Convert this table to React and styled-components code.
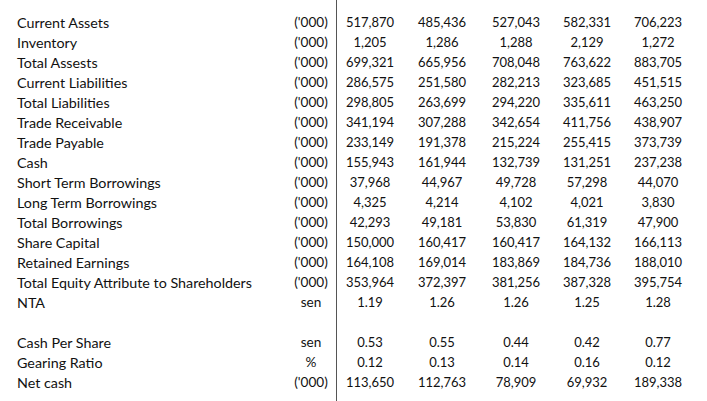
import React from 'react'
import styled, { createGlobalStyle } from 'styled-components'

const GlobalStyle = createGlobalStyle`
  html, body {
    margin: 0;
    padding: 0;
    background: #fff;
  }
  body {
    font-family: 'Lato', 'Liberation Sans', sans-serif;
    color: #111;
  }
`

const Sheet = styled.div`
  display: flex;
  height: 401px;
  width: 707px;
  overflow: hidden;
  font-size: 14.3px;
`

const LabelPane = styled.div`
  width: 336px;
  padding: 12px 4px 0 17px;
  box-sizing: border-box;
`

const DataPane = styled.div`
  border-left: 1px solid #555;
  padding-top: 12px;
`

const LabelRow = styled.div`
  display: grid;
  grid-template-columns: 1fr 42px;
  height: 20px;
  align-items: center;
  white-space: nowrap;
`

const Unit = styled.span`
  text-align: center;
  font-size: 13.6px;
`

const DataRow = styled.div`
  display: grid;
  grid-template-columns: 66px 78px 70px 72px 70px;
  height: 20px;
  align-items: center;
  font-size: 13px;
`

const Num = styled.span`
  text-align: center;
`

const rows = [
  ['Current Assets', "('000)", ['517,870', '485,436', '527,043', '582,331', '706,223']],
  ['Inventory', "('000)", ['1,205', '1,286', '1,288', '2,129', '1,272']],
  ['Total Assests', "('000)", ['699,321', '665,956', '708,048', '763,622', '883,705']],
  ['Current Liabilities', "('000)", ['286,575', '251,580', '282,213', '323,685', '451,515']],
  ['Total Liabilities', "('000)", ['298,805', '263,699', '294,220', '335,611', '463,250']],
  ['Trade Receivable', "('000)", ['341,194', '307,288', '342,654', '411,756', '438,907']],
  ['Trade Payable', "('000)", ['233,149', '191,378', '215,224', '255,415', '373,739']],
  ['Cash', "('000)", ['155,943', '161,944', '132,739', '131,251', '237,238']],
  ['Short Term Borrowings', "('000)", ['37,968', '44,967', '49,728', '57,298', '44,070']],
  ['Long Term Borrowings', "('000)", ['4,325', '4,214', '4,102', '4,021', '3,830']],
  ['Total Borrowings', "('000)", ['42,293', '49,181', '53,830', '61,319', '47,900']],
  ['Share Capital', "('000)", ['150,000', '160,417', '160,417', '164,132', '166,113']],
  ['Retained Earnings', "('000)", ['164,108', '169,014', '183,869', '184,736', '188,010']],
  ['Total Equity Attribute to Shareholders', "('000)", ['353,964', '372,397', '381,256', '387,328', '395,754']],
  ['NTA', 'sen', ['1.19', '1.26', '1.26', '1.25', '1.28']],
  null,
  ['Cash Per Share', 'sen', ['0.53', '0.55', '0.44', '0.42', '0.77']],
  ['Gearing Ratio', '%', ['0.12', '0.13', '0.14', '0.16', '0.12']],
  ['Net cash', "('000)", ['113,650', '112,763', '78,909', '69,932', '189,338']],
]

export default function App() {
  return (
    <>
      <GlobalStyle />
      <Sheet>
        <LabelPane>
          {rows.map((r, i) => (
            <LabelRow key={i}>
              <span>{r ? r[0] : ''}</span>
              <Unit>{r ? r[1] : ''}</Unit>
            </LabelRow>
          ))}
        </LabelPane>
        <DataPane>
          {rows.map((r, i) => (
            <DataRow key={i}>
              {r && r[2].map((v, j) => <Num key={j}>{v}</Num>)}
            </DataRow>
          ))}
        </DataPane>
      </Sheet>
    </>
  )
}
